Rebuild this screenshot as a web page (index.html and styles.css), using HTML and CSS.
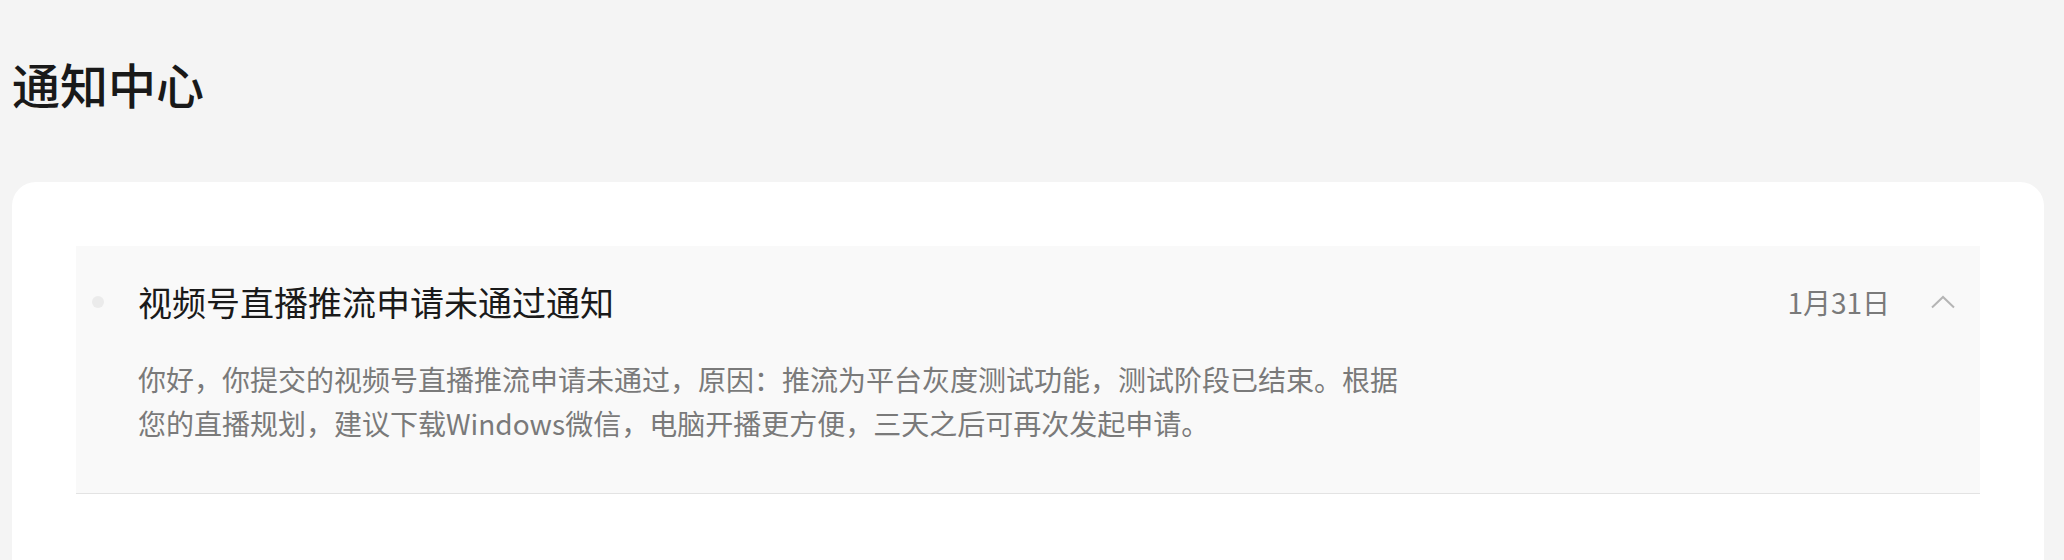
FILE: index.html
```html
<!DOCTYPE html>
<html lang="zh-CN">
<head>
    <meta charset="UTF-8">
    <title>通知中心</title>
    <link rel="stylesheet" href="styles.css">
</head>
<body>

    <main class="page">
        <h1 class="page-title">通知中心</h1>

        <section class="card">
            <article class="notice">
                <div class="notice-head">
                    <span class="notice-dot"></span>
                    <h2 class="notice-title">视频号直播推流申请未通过通知</h2>
                    <span class="notice-date">1月31日</span>
                    <span class="notice-toggle">
                        <svg width="24" height="14" viewBox="0 0 24 14">
                            <polyline points="1,12.5 12,2 23,12.5" fill="none" stroke="#b5b5b5" stroke-width="2"/>
                        </svg>
                    </span>
                </div>
                <p class="notice-body">你好，你提交的视频号直播推流申请未通过，原因：推流为平台灰度测试功能，测试阶段已结束。根据您的直播规划，建议下载Windows微信，电脑开播更方便，三天之后可再次发起申请。</p>
            </article>
        </section>
    </main>

</body>
</html>
```

FILE: styles.css
```css
* {
    box-sizing: border-box;
}

body {
    margin: 0;
    background: #f4f4f4;
    font-family: "Noto Sans CJK SC", sans-serif;
    color: #1a1a1a;
}

.page {
    padding: 59px 20px 0 12px;
}

.page-title {
    margin: 0;
    font-size: 48px;
    line-height: 48px;
    font-weight: 500;
    color: #191919;
}

.card {
    margin-top: 75px;
    min-height: 420px;
    background: #fff;
    border-radius: 24px;
    padding: 64px;
}

.notice {
    background: #f9f9f9;
    border-bottom: 1px solid #e3e3e3;
    padding: 32px 20px 48px 16px;
}

.notice-head {
    display: flex;
    align-items: center;
    height: 48px;
}

.notice-dot {
    width: 12px;
    height: 12px;
    border-radius: 50%;
    background: #ebebeb;
    margin-right: 34px;
}

.notice-title {
    flex: 1;
    margin: 0;
    font-size: 34px;
    line-height: 48px;
    font-weight: 400;
    color: #1a1a1a;
}

.notice-date {
    font-size: 28px;
    line-height: 48px;
    color: #7a7a7a;
    margin-right: 36px;
}

.notice-toggle {
    display: flex;
    align-items: center;
    justify-content: center;
    width: 34px;
    height: 34px;
}

.notice-body {
    margin: 31px 0 0 46px;
    max-width: 1270px;
    font-size: 28px;
    line-height: 44px;
    color: #7a7a7a;
}
```
